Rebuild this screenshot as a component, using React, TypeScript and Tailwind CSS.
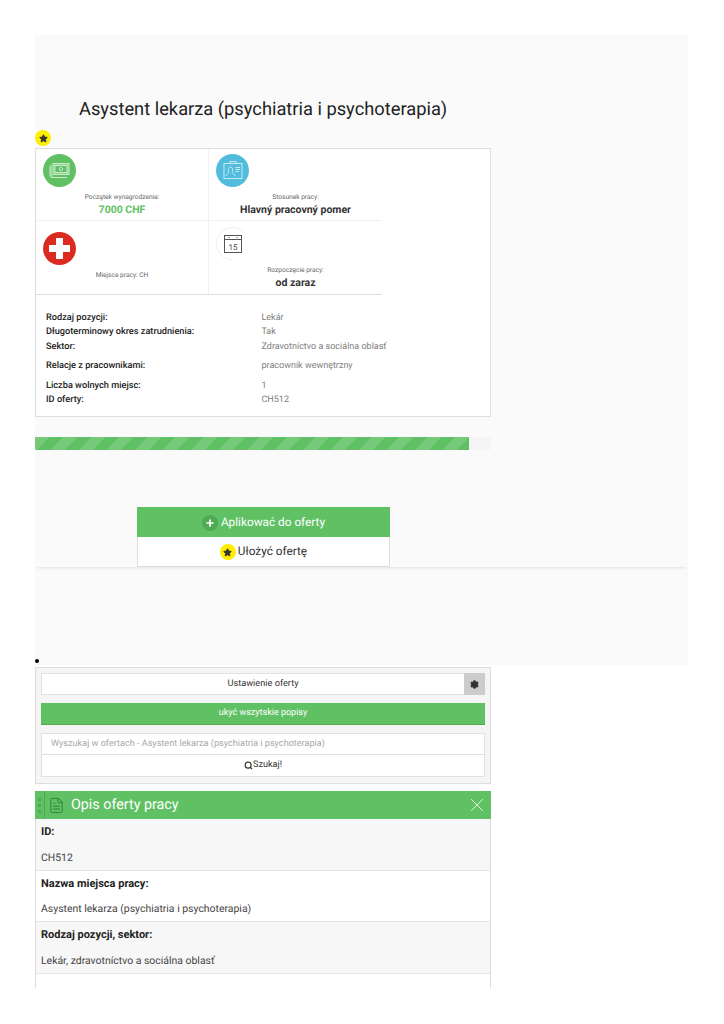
import { Settings, Search, X, Plus, Star, FileText } from "lucide-react";

function StarBadge() {
  return (
    <span className="w-4 h-4 flex items-center justify-center rounded-full bg-[#ffee00] shrink-0">
      <Star className="w-[9px] h-[9px] fill-[#333] text-[#333]" />
    </span>
  );
}

function MoneyIcon() {
  return (
    <svg viewBox="0 0 33 33" className="w-[33px] h-[33px]">
      <circle cx="16.5" cy="16.5" r="16.5" fill="#5fc164" />
      <g fill="none" stroke="#c9ebcb" strokeWidth="1">
        <path d="M9 10.5 L7 12.5 V22.5 L8 23.5 H24" />
        <path d="M8 12 V22 H10" />
        <rect x="10" y="9.5" width="16" height="11" fill="#8dd490" />
        <rect x="12" y="11.5" width="12" height="7" fill="#5fc164" />
        <circle cx="18" cy="15" r="1.6" />
      </g>
    </svg>
  );
}

function BadgeIcon() {
  return (
    <svg viewBox="0 0 33 33" className="w-[33px] h-[33px]">
      <circle cx="16.5" cy="16.5" r="16.5" fill="#52bcdc" />
      <g fill="none" stroke="#c8ecf6" strokeWidth="1">
        <rect x="8" y="9.5" width="18" height="15" />
        <path d="M14 9.5 V7.5 H20 V9.5" />
        <path d="M10 22 C10 19.5 13 20 13 18 C12 17 12 13 14.5 13 C17 13 17 17 16 18 C16 20 19 19.5 19 22" />
        <path d="M19.5 13.5 H24 M19.5 15.5 H24 M19.5 17.5 H23" />
      </g>
    </svg>
  );
}

function CrossIcon() {
  return (
    <svg viewBox="0 0 33 33" className="w-[33px] h-[33px]">
      <circle cx="16.5" cy="16.5" r="16.5" fill="#db2a1f" />
      <path d="M13 6 H20 V13 H27 V20 H20 V27 H13 V20 H6 V13 H13 Z" fill="#fff" />
    </svg>
  );
}

function CalendarIcon() {
  return (
    <svg viewBox="0 0 33 33" className="w-[33px] h-[33px]">
      <path d="M30 8 A16 16 0 1 0 16.5 32.5" fill="none" stroke="#eeeeee" strokeWidth="1" />
      <rect x="8.5" y="8.5" width="17" height="17" fill="#fff" stroke="#555" strokeWidth="1" />
      <path d="M8.5 12.5 H25.5" stroke="#555" strokeWidth="1" />
      <path d="M12.5 10.5 h1 M20.5 10.5 h1" stroke="#555" strokeWidth="1" />
      <text x="17" y="22.5" textAnchor="middle" fontSize="8" fill="#444" fontFamily="Roboto, sans-serif">15</text>
    </svg>
  );
}

function InfoCell({
  icon,
  label,
  value,
  className = "",
  valueClass = "text-[#333]",
}: {
  icon: React.ReactNode;
  label: string;
  value?: string;
  className?: string;
  valueClass?: string;
}) {
  return (
    <div className={`px-[7px] flex flex-col ${className}`}>
      <div className="h-[33px]">{icon}</div>
      <div className="text-center mt-[5px]">
        <div className="text-[6.6px] leading-[10px] text-[#666]">{label}</div>
        {value && <div className={`text-[10.5px] leading-[13px] font-bold mt-[1px] ${valueClass}`}>{value}</div>}
      </div>
    </div>
  );
}

const details = [
  { label: "Rodzaj pozycji:", value: "Lekár", rowClass: "h-[14.3px]" },
  { label: "Długoterminowy okres zatrudnienia:", value: "Tak", rowClass: "h-[14.3px]" },
  { label: "Sektor:", value: "Zdravotníctvo a sociálna oblasť", rowClass: "h-[14.3px]" },
  { label: "Relacje z pracownikami:", value: "pracownik wewnętrzny", rowClass: "h-[14.3px] mt-[5.5px]" },
  { label: "Liczba wolnych miejsc:", value: "1", rowClass: "h-[14.3px] mt-[5px]" },
  { label: "ID oferty:", value: "CH512", rowClass: "h-[14.3px]" },
];

const sections = [
  { title: "ID:", text: "CH512", bg: "bg-[#f7f7f7]" },
  { title: "Nazwa miejsca pracy:", text: "Asystent lekarza (psychiatria i psychoterapia)", bg: "bg-white" },
  { title: "Rodzaj pozycji, sektor:", text: "Lekár, zdravotníctvo a sociálna oblasť", bg: "bg-[#f7f7f7]" },
];

export default function App() {
  return (
    <div className="bg-white h-[1024px] p-[35px] font-['Roboto',sans-serif] text-[#333] overflow-hidden antialiased [text-rendering:geometricPrecision]">
      <div className="w-[653px] bg-[#fafafa] h-[532px] shadow-[0_3px_3px_-2px_rgba(0,0,0,0.1)] relative z-10">
        <h1 className="pt-[60px] pl-[44px] h-[95px] text-[18.3px] leading-[29px] font-normal text-[#222]">
          Asystent lekarza (psychiatria i psychoterapia)
        </h1>
        <div className="h-[18px] flex items-start">
          <StarBadge />
        </div>

        <div className="w-[456px] h-[269px] bg-white border border-[#dddddd]">
          <div className="w-[346px] grid grid-cols-2 grid-rows-[72px_73px] border-b border-[#dddddd]">
            <InfoCell
              icon={<MoneyIcon />}
              label="Początek wynagrodzenie:"
              value="7000 CHF"
              valueClass="text-[#5fc164]"
              className="pt-[5px] border-b border-r border-[#f1f1f1]"
            />
            <InfoCell
              icon={<BadgeIcon />}
              label="Stosunek pracy:"
              value="Hlavný pracovný pomer"
              className="pt-[5px] border-b border-[#f1f1f1]"
            />
            <InfoCell icon={<CrossIcon />} label="Miejsce pracy: CH" className="pt-[11px] border-r border-[#f1f1f1]" />
            <div className="px-[7px] pt-[6px] flex flex-col">
              <div className="h-[33px]"><CalendarIcon /></div>
              <div className="text-center mt-[5px]">
                <div className="text-[6.6px] leading-[10px] text-[#666]">Rozpoczęcie pracy:</div>
                <div className="text-[10.5px] leading-[13px] font-bold mt-[1px]">od zaraz</div>
              </div>
            </div>
          </div>

          <div className="pl-[10px] pt-[16px] leading-[14px]">
            {details.map((row) => (
              <div key={row.label} className={`flex ${row.rowClass}`}>
                <div className="w-[215.5px] text-[9.2px] font-medium text-[#222]">{row.label}</div>
                <div className="text-[9px] text-[#808080]">{row.value}</div>
              </div>
            ))}
          </div>
        </div>

        <div className="w-[456px] h-[13px] mt-[20px] bg-[#f5f5f5]">
          <div className="w-[434px] h-full bg-[#5fc164] bg-[linear-gradient(135deg,rgba(255,255,255,0.15)_25%,transparent_25%,transparent_50%,rgba(255,255,255,0.15)_50%,rgba(255,255,255,0.15)_75%,transparent_75%,transparent)] bg-[length:28px_28px]" />
        </div>

        <div className="ml-[102px] mt-[57px] w-[253px]">
          <div className="h-[30px] pt-[1px] bg-[#5fc164] text-white text-[11.8px] flex items-center justify-center gap-[3px]">
            <span className="w-4 h-4 rounded-full bg-[#4fa955] flex items-center justify-center">
              <Plus className="w-[10px] h-[10px]" strokeWidth={4} />
            </span>
            Aplikować do oferty
          </div>
          <div className="h-[30px] pt-[1px] bg-white border border-t-0 border-[#dddddd] text-[11.8px] flex items-center justify-center gap-[2px]">
            <StarBadge />
            Ułożyć ofertę
          </div>
        </div>
      </div>

      <div className="w-[653px] h-[98px] bg-[#fafafa] relative">
        <span className="absolute left-0 bottom-[2px] w-[4px] h-[4px] rounded-full bg-black" />
      </div>

      <div className="w-[456px] h-[117px] mt-[2px] bg-[#f5f5f5] border border-[#dddddd] p-[5px]">
        <div className="relative h-[22px] border border-[#e3e3e3] bg-white text-center text-[9.2px] leading-[20px]">
          Ustawienie oferty
          <div className="absolute -right-px -top-px w-[21px] h-[22px] bg-[#cccccc] flex items-center justify-center">
            <Settings className="w-[9px] h-[9px] fill-[#333] text-[#333]" strokeWidth={3} />
          </div>
        </div>
        <div className="h-[22px] mt-[8px] bg-[#5fc164] border-b border-[#4fa955] text-white text-[9px] flex items-center justify-center">
          ukyć wszytskie popisy
        </div>
        <div className="mt-[8px] border border-[#e0e0e0] bg-white">
          <div className="h-[21px] px-[9px] text-[9.1px] leading-[20px] text-[#a9a9a9] border-b border-[#e0e0e0]">
            Wyszukaj w ofertach - Asystent lekarza (psychiatria i psychoterapia)
          </div>
          <div className="h-[21px] flex items-center justify-center text-[9.1px]">
            <Search className="w-[9px] h-[9px]" strokeWidth={3} />
            Szukaj!
          </div>
        </div>
      </div>

      <div className="w-[456px] mt-[7px] h-[28px] bg-[#5fc164] text-white flex items-center relative">
        <div className="w-[10px] h-full border-r border-[#4fa955] flex flex-col items-center justify-center gap-[3px]">
          <span className="w-[3px] h-[3px] bg-[#4fa955]" />
          <span className="w-[3px] h-[3px] bg-[#4fa955]" />
          <span className="w-[3px] h-[3px] bg-[#4fa955]" />
        </div>
        <FileText className="w-[17px] h-[17px] ml-[3px] text-[#2f7d35]" strokeWidth={1.3} />
        <span className="ml-[6px] text-[14.3px] leading-[27px]">Opis oferty pracy</span>
        <X className="absolute right-[3px] top-[3px] w-[22px] h-[22px]" strokeWidth={0.9} />
      </div>

      <div className="w-[456px] h-[169px] border-x border-[#dddddd] overflow-hidden">
        {sections.map((s) => (
          <div key={s.title} className={`${s.bg} h-[51.5px] border-b border-[#e5e5e5] px-[5px] pt-[5px]`}>
            <div className="font-bold text-[11px] leading-[15px] text-[#222]">{s.title}</div>
            <div className="mt-[10.5px] text-[10.45px] leading-[15px] text-[#444]">{s.text}</div>
          </div>
        ))}
      </div>
    </div>
  );
}
